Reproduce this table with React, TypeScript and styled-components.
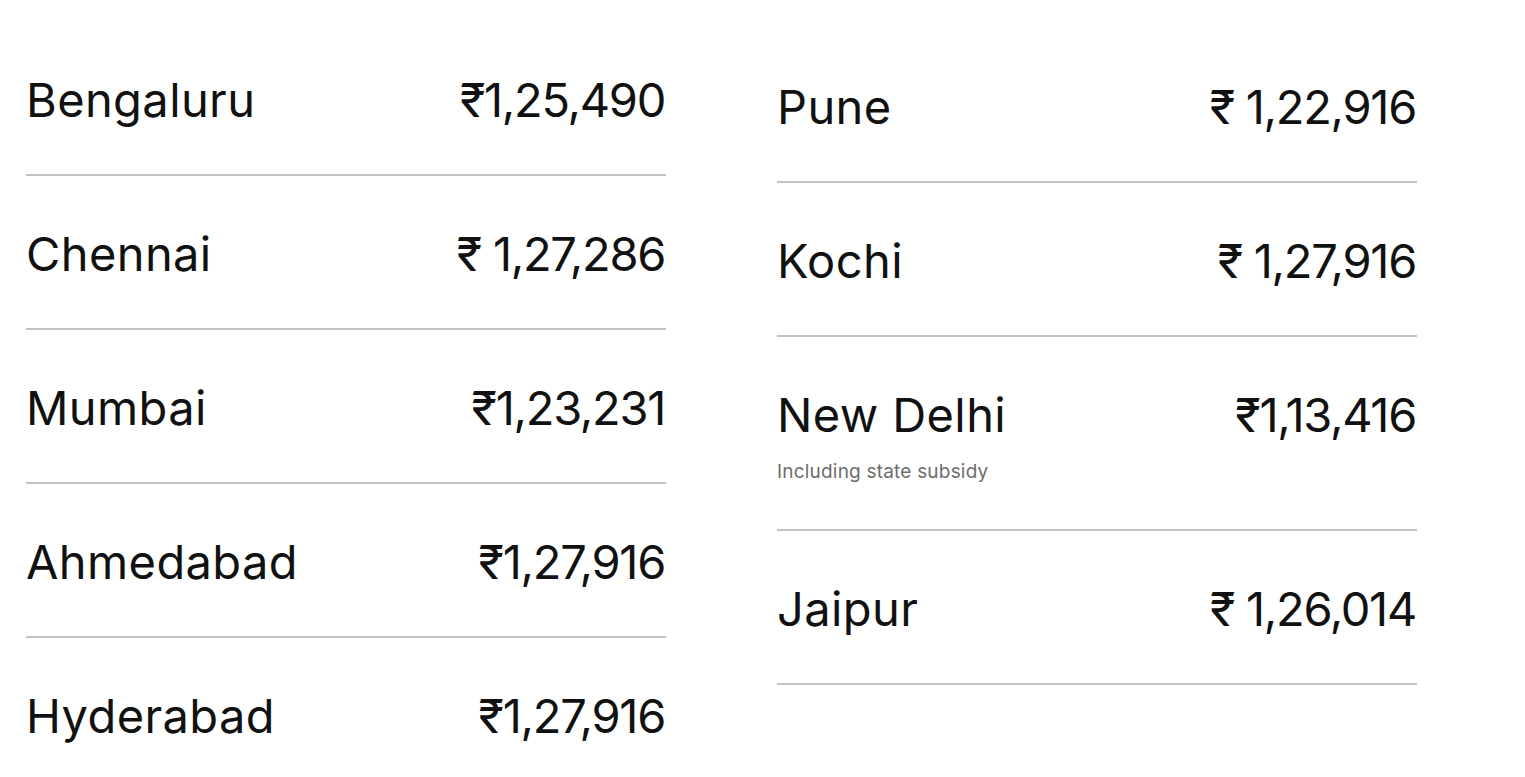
import React from "react";
import styled, { createGlobalStyle } from "styled-components";

const Global = createGlobalStyle`
  html, body { margin: 0; padding: 0; background: #ffffff; }
  body { font-family: Inter, "Liberation Sans", sans-serif; color: #111111; }
`;

const Page = styled.div`
  display: grid;
  grid-template-columns: 640px 640px;
  column-gap: 111px;
  padding: 22px 0 0 26px;
  align-items: start;
`;

const Column = styled.div<{ $offset?: number }>`
  display: flex;
  flex-direction: column;
  margin-top: ${(p) => p.$offset ?? 0}px;
`;

const Row = styled.div<{ $last?: boolean }>`
  padding: 50px 0 46px;
  border-bottom: 2px solid ${(p) => (p.$last ? "transparent" : "#c2c2c2")};
`;

const Line = styled.div`
  display: flex;
  justify-content: space-between;
  align-items: baseline;
  font-size: 47px;
  line-height: 56px;
  font-weight: 400;
`;

const City = styled.span`
  letter-spacing: 0.4px;
`;

const Price = styled.span`
  letter-spacing: -1.3px;
  margin-right: 1px;
`;

const Note = styled.div`
  margin-top: 18px;
  font-size: 19px;
  line-height: 22px;
  color: #6d6d6d;
  letter-spacing: 0.2px;
`;

type Item = { city: string; price: string; note?: string };

const left: Item[] = [
  { city: "Bengaluru", price: "₹1,25,490" },
  { city: "Chennai", price: "₹ 1,27,286" },
  { city: "Mumbai", price: "₹1,23,231" },
  { city: "Ahmedabad", price: "₹1,27,916" },
  { city: "Hyderabad", price: "₹1,27,916" },
];

const right: Item[] = [
  { city: "Pune", price: "₹ 1,22,916" },
  { city: "Kochi", price: "₹ 1,27,916" },
  { city: "New Delhi", price: "₹1,13,416", note: "Including state subsidy" },
  { city: "Jaipur", price: "₹ 1,26,014" },
];

function List({ items, offset, lastOpen }: { items: Item[]; offset?: number; lastOpen?: boolean }) {
  return (
    <Column $offset={offset}>
      {items.map((it, i) => (
        <Row key={it.city} $last={lastOpen && i === items.length - 1}>
          <Line>
            <City>{it.city}</City>
            <Price>{it.price}</Price>
          </Line>
          {it.note && <Note>{it.note}</Note>}
        </Row>
      ))}
    </Column>
  );
}

export default function App() {
  return (
    <>
      <Global />
      <Page>
        <List items={left} lastOpen />
        <List items={right} offset={7} />
      </Page>
    </>
  );
}
